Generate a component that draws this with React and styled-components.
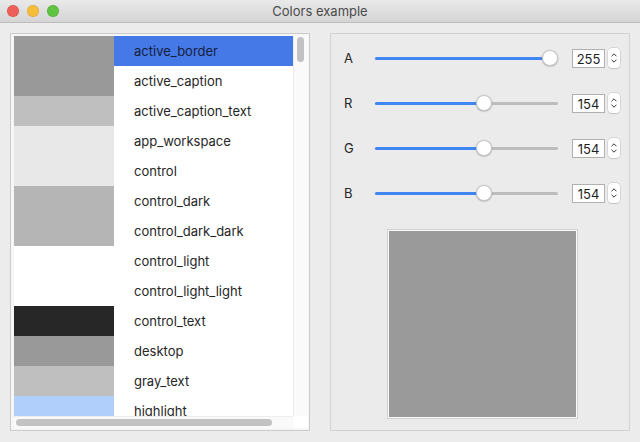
import React from 'react';
import styled, { createGlobalStyle } from 'styled-components';

const GlobalStyle = createGlobalStyle`
  body {
    margin: 0;
    background: #ececec;
    font-family: Inter, 'Liberation Sans', sans-serif;
  }
`;

const colorRows = [
  { name: 'active_border', color: '#999999' },
  { name: 'active_caption', color: '#999999' },
  { name: 'active_caption_text', color: '#bfbfbf' },
  { name: 'app_workspace', color: '#e8e8e8' },
  { name: 'control', color: '#e8e8e8' },
  { name: 'control_dark', color: '#b5b5b5' },
  { name: 'control_dark_dark', color: '#b5b5b5' },
  { name: 'control_light', color: '#ffffff' },
  { name: 'control_light_light', color: '#ffffff' },
  { name: 'control_text', color: '#272727' },
  { name: 'desktop', color: '#999999' },
  { name: 'gray_text', color: '#bfbfbf' },
  { name: 'highlight', color: '#b0cffb' },
];

const channels = [
  { label: 'A', value: 255 },
  { label: 'R', value: 154 },
  { label: 'G', value: 154 },
  { label: 'B', value: 154 },
];

const Window = styled.div`
  width: 640px;
  height: 442px;
  background: #ececec;
  display: flex;
  flex-direction: column;
  overflow: hidden;
`;

const TitleBar = styled.div`
  height: 22px;
  flex: none;
  background: linear-gradient(#e9e9e9, #d5d5d5);
  border-bottom: 1px solid #bdbdbd;
  display: flex;
  align-items: center;
  position: relative;
`;

const Lights = styled.div`
  display: flex;
  gap: 8px;
  padding-left: 7px;
`;

const Light = styled.span`
  width: 12px;
  height: 12px;
  border-radius: 50%;
  background: ${(p) => p.$color};
  box-shadow: inset 0 0 0 0.5px rgba(0, 0, 0, 0.15);
`;

const Title = styled.div`
  position: absolute;
  left: 0;
  right: 0;
  text-align: center;
  font-size: 13px;
  color: #4b4b4b;
  pointer-events: none;
`;

const Content = styled.div`
  display: flex;
  gap: 20px;
  padding: 10px 10px 0 10px;
`;

const ListPanel = styled.div`
  width: 294px;
  height: 392px;
  border: 1px solid #cbcbcb;
  background: #f6f6f6;
  padding: 2px 1px 2px 3px;
  display: grid;
  grid-template-columns: 1fr 15px;
  grid-template-rows: 1fr 12px;
`;

const ListViewport = styled.div`
  overflow: hidden;
  background: #fff;
`;

const ListRow = styled.div`
  display: grid;
  grid-template-columns: 100px 1fr;
  height: 30px;
`;

const Swatch = styled.div`
  background: ${(p) => p.$color};
`;

const RowName = styled.div`
  display: flex;
  align-items: center;
  padding-left: 20px;
  font-size: 13px;
  color: ${(p) => (p.$selected ? '#15203a' : '#262626')};
  background: ${(p) => (p.$selected ? '#4679e8' : '#fff')};
`;

const VScroll = styled.div`
  background: #fafafa;
  border-left: 1px solid #ededed;
  padding: 1px 0 0 3px;
`;

const VThumb = styled.div`
  width: 7px;
  height: 25px;
  border-radius: 4px;
  background: #c2c2c2;
`;

const HScroll = styled.div`
  background: #fafafa;
  border-top: 1px solid #ededed;
  padding: 2px 0 0 2px;
`;

const HThumb = styled.div`
  width: 256px;
  height: 7px;
  border-radius: 4px;
  background: #c2c2c2;
`;

const Corner = styled.div`
  background: #fff;
`;

const ControlPanel = styled.div`
  width: 300px;
  height: 398px;
  box-sizing: border-box;
  border: 1px solid #d2d2d2;
  background: #ebebeb;
  display: flex;
  flex-direction: column;
  padding: 14px 0 0 13px;
`;

const Rows = styled.div`
  display: flex;
  flex-direction: column;
  gap: 25px;
`;

const ChannelRow = styled.div`
  display: flex;
  align-items: center;
  height: 20px;
`;

const ChannelLabel = styled.div`
  width: 31px;
  font-size: 13px;
  color: #262626;
`;

const Slider = styled.div`
  position: relative;
  width: 183px;
  height: 20px;
  display: flex;
  align-items: center;
`;

const Track = styled.div`
  width: 100%;
  height: 3px;
  border-radius: 2px;
  background: #bdbdbd;
  display: flex;
`;

const TrackFill = styled.div`
  height: 100%;
  border-radius: 2px;
  background: #3f86f2;
`;

const Thumb = styled.div`
  position: absolute;
  top: 2px;
  width: 16px;
  height: 16px;
  border-radius: 50%;
  background: #fff;
  border: 0.5px solid #c8c8c8;
  box-shadow: 0 0.5px 1.5px rgba(0, 0, 0, 0.3);
  box-sizing: border-box;
`;

const Spin = styled.div`
  display: flex;
  align-items: center;
  gap: 3px;
  margin-left: 14px;
`;

const SpinField = styled.div`
  width: 33px;
  height: 19px;
  box-sizing: border-box;
  border: 1px solid #b0b0b0;
  background: #fff;
  font-size: 13px;
  color: #1e1e1e;
  display: flex;
  align-items: center;
  justify-content: center;
  padding-top: 1px;
`;

const Stepper = styled.div`
  width: 12px;
  height: 20px;
  box-sizing: border-box;
  border-radius: 4px;
  background: #fff;
  box-shadow: 0 0 0 0.5px #c4c4c4, 0 0.5px 1px rgba(0, 0, 0, 0.15);
  display: flex;
  align-items: center;
  justify-content: center;
`;

const Preview = styled.div`
  margin: 26px 0 0 43px;
  width: 191px;
  height: 190px;
  box-sizing: border-box;
  border: 1px solid #d2d2d2;
  padding: 1px;
  background: #f8f8f8;
`;

const PreviewFill = styled.div`
  width: 100%;
  height: 100%;
  background: ${(p) => p.$color};
`;

const StepperIcon = () => (
  <svg width="8" height="14" viewBox="0 0 8 14" fill="none" stroke="#333" strokeWidth="1" strokeLinecap="round" strokeLinejoin="round">
    <path d="M1.8 5 L4 2.8 L6.2 5" />
    <path d="M1.8 9 L4 11.2 L6.2 9" />
  </svg>
);

const ChannelSlider = ({ value }) => {
  const center = 8 + (167 * value) / 255;
  return (
    <Slider>
      <Track>
        <TrackFill style={{ width: `${center}px` }} />
      </Track>
      <Thumb style={{ left: `${center - 8}px` }} />
    </Slider>
  );
};

const App = () => {
  const [a, r, g, b] = channels.map((c) => c.value);
  return (
    <>
      <GlobalStyle />
      <Window>
        <TitleBar>
          <Lights>
            <Light $color="#ee5f57" />
            <Light $color="#f6bd3b" />
            <Light $color="#5fc441" />
          </Lights>
          <Title>Colors example</Title>
        </TitleBar>
        <Content>
          <ListPanel>
            <ListViewport>
              {colorRows.map((row, i) => (
                <ListRow key={row.name}>
                  <Swatch $color={row.color} />
                  <RowName $selected={i === 0}>{row.name}</RowName>
                </ListRow>
              ))}
            </ListViewport>
            <VScroll>
              <VThumb />
            </VScroll>
            <HScroll>
              <HThumb />
            </HScroll>
            <Corner />
          </ListPanel>
          <ControlPanel>
            <Rows>
              {channels.map((c) => (
                <ChannelRow key={c.label}>
                  <ChannelLabel>{c.label}</ChannelLabel>
                  <ChannelSlider value={c.value} />
                  <Spin>
                    <SpinField>{c.value}</SpinField>
                    <Stepper>
                      <StepperIcon />
                    </Stepper>
                  </Spin>
                </ChannelRow>
              ))}
            </Rows>
            <Preview>
              <PreviewFill $color={`rgba(${r}, ${g}, ${b}, ${a / 255})`} />
            </Preview>
          </ControlPanel>
        </Content>
      </Window>
    </>
  );
};

export default App;
